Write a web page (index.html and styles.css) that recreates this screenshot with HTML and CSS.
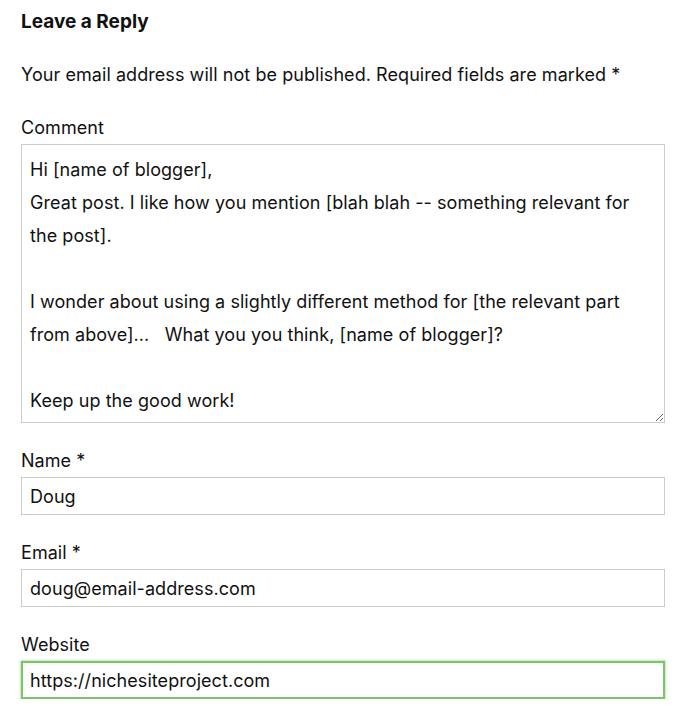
FILE: index.html
```html
<!DOCTYPE html>
<html>
<head>
<meta charset="utf-8">
<link rel="stylesheet" href="styles.css">
</head>
<body>
<div class="respond">
  <h3 class="reply-title">Leave a Reply</h3>
  <p class="notes">Your email address will not be published. Required fields are marked <span class="req">*</span></p>
  <div class="field">
    <label class="lbl" for="c">Comment</label>
    <textarea class="comment" id="c">Hi [name of blogger],
Great post. I like how you mention [blah blah -- something relevant for the post].

I wonder about using a slightly different method for [the relevant part from above]...   What you you think, [name of blogger]?

Keep up the good work!</textarea>
  </div>
  <div class="field">
    <label class="lbl" for="n">Name <span class="req">*</span></label>
    <input class="inp" id="n" type="text" value="Doug">
  </div>
  <div class="field">
    <label class="lbl" for="e">Email <span class="req">*</span></label>
    <input class="inp" id="e" type="text" value="doug@email-address.com">
  </div>
  <div class="field">
    <label class="lbl" for="w">Website</label>
    <input class="inp inp-focus" id="w" type="text" value="https://nichesiteproject.com">
  </div>
</div>
</body>
</html>
```
FILE: styles.css
```css
html, body {
  margin: 0;
  padding: 0;
  background: #fff;
}
body {
  font-family: Inter, "Liberation Sans", Arial, sans-serif;
  color: #111;
  font-size: 18px;
  letter-spacing: 0.06px;
}
.respond {
  padding: 0 21px;
}
.reply-title {
  margin: 0;
  padding-top: 10px;
  font-size: 19px;
  font-weight: 700;
  line-height: 24px;
  letter-spacing: 0;
  color: #111;
}
.notes {
  margin: 29px 0 0;
  line-height: 24px;
}
.field {
  margin-top: 29px;
}
.field + .field {
  margin-top: 26px;
}
.lbl {
  display: block;
  line-height: 24px;
  margin-bottom: 4px;
}
.comment {
  display: block;
  box-sizing: border-box;
  width: 100%;
  height: 279px;
  margin: 0;
  padding: 8px 8px 4px;
  border: 1px solid #ccc;
  border-radius: 0;
  font-family: Inter, "Liberation Sans", Arial, sans-serif;
  font-size: 18px;
  letter-spacing: 0.06px;
  line-height: 33px;
  color: #111;
  overflow: hidden;
  resize: vertical;
  outline: none;
}
.inp {
  display: block;
  box-sizing: border-box;
  width: 100%;
  height: 38px;
  margin: 0;
  padding: 0 8px;
  border: 1px solid #ccc;
  border-radius: 0;
  font-family: Inter, "Liberation Sans", Arial, sans-serif;
  font-size: 18px;
  letter-spacing: 0.06px;
  color: #111;
  outline: none;
}
.inp-focus {
  border: 2px solid #7cc46b;
  padding: 0 7px;
  box-shadow: 0 0 2px 1px rgba(124, 196, 107, 0.45);
}
```
